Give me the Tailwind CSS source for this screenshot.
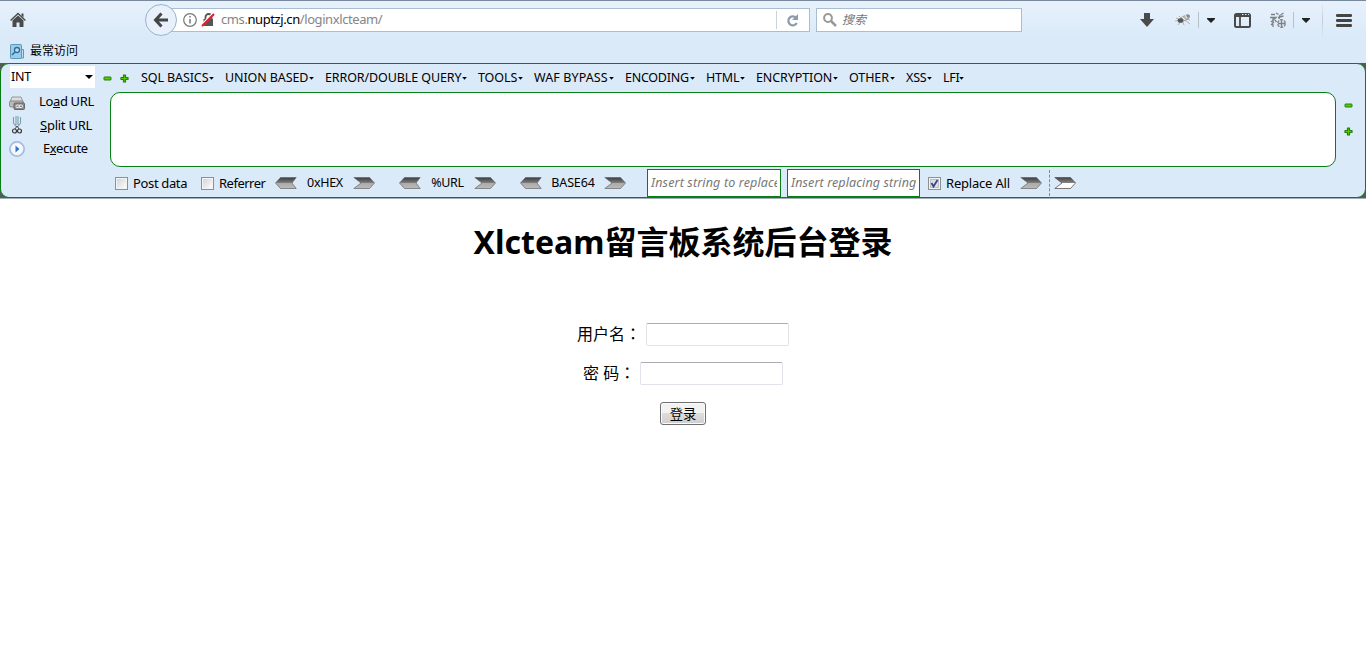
<!DOCTYPE html>
<html lang="zh">
<head>
<meta charset="utf-8">
<title>Xlcteam留言板系统后台登录</title>
<script src="https://cdn.jsdelivr.net/npm/@tailwindcss/browser@4"></script>
</head>
<body class="h-[648px] w-[1366px] overflow-hidden bg-white font-['Noto_Sans','Noto_Sans_CJK_SC',sans-serif] text-[13px] text-black">
<svg width="0" height="0" class="absolute">
  <defs>
    <linearGradient id="metal" x1="0" y1="0" x2="0" y2="1"><stop offset="0" stop-color="#3d3d3d"/><stop offset=".45" stop-color="#777"/><stop offset=".5" stop-color="#aaa"/><stop offset="1" stop-color="#bbb"/></linearGradient>
    <linearGradient id="half" x1="0" y1="0" x2="0" y2="1"><stop offset="0" stop-color="#444"/><stop offset=".5" stop-color="#888"/><stop offset=".52" stop-color="#fff"/><stop offset="1" stop-color="#fff"/></linearGradient>
    <symbol id="right" viewBox="0 0 22 12"><path d="M.8.5h15.700l5 5.500-5 5.500H.8L8 6z" fill="url(#metal)" stroke="#666" stroke-width=".7"/></symbol>
    <symbol id="left" viewBox="0 0 22 12"><path d="M21.200.5H5.500L.5 6l5 5.500h15.700L17 6z" fill="url(#metal)" stroke="#666" stroke-width=".7"/></symbol>
    <symbol id="minus" viewBox="0 0 9 9"><rect x="1" y="3" width="7" height="3" rx=".5" fill="#4fd000" stroke="#2b7d0c"/></symbol>
    <symbol id="plus" viewBox="0 0 9 9"><path d="M3.500 1h2v2.500H8v2H5.500V8h-2V5.500H1v-2h2.500z" fill="#4fd000" stroke="#2b7d0c" stroke-width="1.200" stroke-linejoin="round"/></symbol>
    <symbol id="caret" viewBox="0 0 5 3"><path d="M.2 0h4.600L2.500 2.700z"/></symbol>
    <symbol id="drop" viewBox="0 0 8 5"><path d="M0 0h8v1L4 5 0 1z" fill="#222"/></symbol>
  </defs>
</svg>

<header class="flex h-[63px] flex-col border-t border-[#78889d] bg-linear-to-b from-[#e7f1fc] to-[#daeaf9] to-60%">
  <div class="flex h-[38px] items-center">
    <svg class="ml-[10px] w-4" height="16" viewBox="0 0 16 16" fill="#4a4a4a"><path d="M8 3.500l5.500 5V15H9.500v-4.500h-3V15h-4V8.500z"/><path d="M.6 8.600L8 1.500l7.400 7.100" fill="none" stroke="#4a4a4a" stroke-width="1.400"/><path d="M11.500 1.500h2v4l-2-2z"/></svg>
    <div class="z-10 ml-[119px] flex size-8 items-center justify-center rounded-full border border-[#9db2c8] bg-[#e8f1fb]">
      <svg width="16" height="16" viewBox="0 0 16 16" fill="none" stroke="#454545" stroke-width="3"><path d="M8.500 1.500L2.500 8l6 6.500M3 8h12"/></svg>
    </div>
    <div class="-ml-[6px] flex h-6 w-[639px] items-center border border-[#a9bdd3] bg-white pl-[11px]">
      <svg width="14" height="14" viewBox="0 0 14 14" fill="none" stroke="#777"><circle cx="7" cy="7" r="6.300" stroke-width="1.200"/><path d="M7 6v4.500M7 3v1.600" stroke-width="1.500"/></svg>
      <svg class="ml-1" width="14" height="14" viewBox="0 0 14 14"><path d="M2.500 6h9.500v7H2.500z" fill="#555"/><path d="M4.500 6V4a3 3 0 016 0v2" fill="none" stroke="#555" stroke-width="1.800"/><path d="M1 12L12 1" stroke="#fff" stroke-width="2.600"/><path d="M1 13L13 1" stroke="#d8202a" stroke-width="1.900"/></svg>
      <span class="ml-[6px] w-[555px] whitespace-nowrap text-[13px] tracking-[-0.41px] text-[#858585]">cms.<span class="text-black">nuptzj.cn</span>/loginxlcteam/</span>
      <span class="h-[18px] w-px bg-[#c9d3de]"></span>
      <svg class="ml-[9px]" width="13" height="13" viewBox="0 0 13 13"><path d="M10 3.600A4.500 4.500 0 1010.800 9" fill="none" stroke="#8c9baa" stroke-width="2.200"/><path d="M12 0v6H6z" fill="#8c9baa"/></svg>
    </div>
    <div class="ml-[6px] flex h-6 w-[206px] items-center border border-[#a9bdd3] bg-white pl-[6px]">
      <svg width="14" height="14" viewBox="0 0 14 14" fill="none" stroke="#999"><circle cx="5" cy="5" r="3.900" stroke-width="2"/><path d="M8 8l5 5" stroke-width="2.500"/></svg>
      <span class="ml-[5px] text-[12px] italic text-[#777]">搜索</span>
    </div>
    <svg class="ml-[118px]" width="14" height="14" viewBox="0 0 14 14" fill="#4a4a4a"><path d="M4 0h6v6h4l-7 8-7-8h4z"/></svg>
    <svg class="ml-[21px]" width="16" height="14" viewBox="0 0 16 14"><g stroke="#999" stroke-width=".7"><path d="M1 5l5 2M0 8l6-1M3 12l3-4M9 12L7 7M10 7l5 4M11 6l4 1M6 5L4 3"/></g><ellipse cx="10" cy="5" rx="5" ry="2.300" transform="rotate(-25 10 5)" fill="#bbb" stroke="#888" stroke-width=".6"/><ellipse cx="5.500" cy="7.500" rx="2.800" ry="2.300" fill="#555"/><circle cx="13" cy="3" r="1.600" fill="#888"/><path d="M7 4l3 3M10 2l2 3" stroke="#eee"/></svg>
    <span class="ml-[7px] h-4 w-px bg-[#b5c0cb]"></span>
    <svg class="ml-[8px]" width="8" height="5"><use href="#drop"/></svg>
    <svg class="ml-[19px]" width="17" height="15" viewBox="0 0 17 15" fill="none" stroke="#4a4a4a" stroke-width="2"><rect x="1" y="1" width="15" height="13" rx="1.500"/><path d="M1 3h15M6 4v10" stroke-width="1.800"/><path d="M8 1.500h1.500M11 1.500h1.500M14 1.500h1" stroke="#dce7f2" stroke-width="1"/></svg>
    <svg class="ml-[19px]" width="16" height="16" viewBox="0 0 16 16" fill="none" stroke="#808080" stroke-width="1.300"><path d="M1 2.500h4M0 5.500h6L1 10M3 5v10M5 8l1.500 2M6 1l2.500 1.500M13.500 1l-3 2M8 5.500l5.500-1.500M10 3l-1 4M1 13l3-3"/><circle cx="11.500" cy="11.500" r="3.800" stroke-dasharray="3 1"/><path d="M11.500 8v7M8 11.500h7"/></svg>
    <span class="ml-[7px] h-4 w-px bg-[#b5c0cb]"></span>
    <svg class="ml-[8px]" width="8" height="5"><use href="#drop"/></svg>
    <span class="ml-[12px] h-[37px] w-px bg-linear-to-b from-transparent via-[#c3ccd7] to-transparent"></span>
    <svg class="ml-[13px]" width="16" height="13" viewBox="0 0 16 13" fill="#444"><rect width="16" height="3" rx="1.200"/><rect y="5" width="16" height="3" rx="1.200"/><rect y="10" width="16" height="3" rx="1.200"/></svg>
  </div>
  <div class="flex h-[24px] items-center pl-[10px]">
    <svg width="14" height="15" viewBox="0 0 14 15"><path d="M10.500 5.500h3v8.500h-3" fill="#bde0f3" stroke="#5b98bb"/><rect x=".5" y=".5" width="11" height="14" rx=".8" fill="#9bcbe6" stroke="#5b98bb"/><circle cx="7" cy="6" r="2.500" fill="#b8e1f5" stroke="#336d94" stroke-width="1.300"/><path d="M5 8l-3 3" stroke="#336d94" stroke-width="1.600"/></svg>
    <span class="ml-[6px] text-[12px]">最常访问</span>
  </div>
</header>

<section class="h-[135px] bg-[#585858]">
  <div class="flex h-[135px] rounded-[9px] border border-[#087f15] bg-[#daeaf9]">
    <aside class="flex w-[109px] shrink-0 flex-col pl-[8px] pt-[2px]">
      <div class="ml-px flex h-[22px] w-[85px] items-center bg-white pl-px text-[12.500px]">
        <span class="w-[74px] pt-px tracking-[-0.3px]">INT</span><svg width="8" height="4" viewBox="0 0 8 4"><path d="M0 0h8L4 4z"/></svg>
      </div>
      <div class="flex h-[25px] items-center pt-[3px]">
        <svg class="mt-px" width="16" height="14" viewBox="0 0 16 14"><path d="M3 1h9l2 5H1z" fill="#ddd" stroke="#999"/><rect x=".5" y="5" width="14" height="6" rx="1.500" fill="#bbb" stroke="#888"/><rect x="5" y="7" width="10.500" height="6.500" rx="1" fill="#888" stroke="#666"/><rect x="7" y="9" width="3.500" height="2.500" rx="1" fill="none" stroke="#eee"/><rect x="10" y="9" width="3.500" height="2.500" rx="1" fill="none" stroke="#eee"/></svg>
        <span class="ml-[14px] whitespace-nowrap tracking-[-0.35px]">Lo<u>a</u>d URL</span>
      </div>
      <div class="flex h-[24px] items-center pl-[3px]">
        <svg width="10" height="18" viewBox="0 0 10 18" fill="none"><path d="M1.500 1v6l3 4M8.500 1v6l-3 4M4 0v9M6 0v9" stroke="#7ba0ac" stroke-width="1.100"/><circle cx="2.500" cy="15" r="2" stroke="#3a3a3a" stroke-width="1.200"/><circle cx="7.500" cy="15" r="2" stroke="#3a3a3a" stroke-width="1.200"/><path d="M3 13l2-3 2 3" stroke="#444"/></svg>
        <span class="ml-[18px] whitespace-nowrap pt-px tracking-[-0.25px]"><u>S</u>plit URL</span>
      </div>
      <div class="flex h-[23px] items-center">
        <svg width="16" height="16" viewBox="0 0 16 16"><circle cx="8" cy="8" r="7.200" fill="#e5eefa" stroke="#9db9df" stroke-width="1.500"/><circle cx="8" cy="8" r="5.500" fill="#f6faff"/><path d="M6.500 4.500l4 3.500-4 3.500z" fill="#3473c6"/></svg>
        <span class="ml-[17px] whitespace-nowrap pl-px tracking-[-0.4px]">E<u>x</u>ecute</span>
      </div>
    </aside>

    <div class="flex w-[1226px] shrink-0 flex-col">
      <nav class="-ml-[7px] flex h-[28px] items-center whitespace-nowrap text-[12.500px] tracking-[-0.1px]">
        <svg class="mr-[8px]" width="9" height="9"><use href="#minus"/></svg>
        <svg class="mr-[12px]" width="9" height="9"><use href="#plus"/></svg>
        <div class="flex w-[84px] items-center"><span class="w-[68px]">SQL BASICS</span><svg width="5" height="3"><use href="#caret"/></svg></div>
        <div class="flex w-[100px] items-center"><span class="w-[84px]">UNION BASED</span><svg width="5" height="3"><use href="#caret"/></svg></div>
        <div class="flex w-[153px] items-center"><span class="w-[137px]">ERROR/DOUBLE QUERY</span><svg width="5" height="3"><use href="#caret"/></svg></div>
        <div class="flex w-[56px] items-center"><span class="w-[40px]">TOOLS</span><svg width="5" height="3"><use href="#caret"/></svg></div>
        <div class="flex w-[91px] items-center"><span class="w-[75px] tracking-[0.1px]">WAF BYPASS</span><svg width="5" height="3"><use href="#caret"/></svg></div>
        <div class="flex w-[81px] items-center"><span class="w-[65px] tracking-[-0.25px]">ENCODING</span><svg width="5" height="3"><use href="#caret"/></svg></div>
        <div class="flex w-[50px] items-center"><span class="w-[34px] tracking-[-0.2px]">HTML</span><svg width="5" height="3"><use href="#caret"/></svg></div>
        <div class="flex w-[93px] items-center"><span class="w-[77px]">ENCRYPTION</span><svg width="5" height="3"><use href="#caret"/></svg></div>
        <div class="flex w-[57px] items-center"><span class="w-[41px]">OTHER</span><svg width="5" height="3"><use href="#caret"/></svg></div>
        <div class="flex w-[37px] items-center"><span class="w-[21px] tracking-[-0.2px]">XSS</span><svg width="5" height="3"><use href="#caret"/></svg></div>
        <div class="flex items-center"><span class="w-[16px] tracking-[-0.3px]">LFI</span><svg width="5" height="3"><use href="#caret"/></svg></div>
      </nav>
      <div class="h-[75px] rounded-[10px] border border-[#087f15] bg-white"></div>
      <div class="flex h-[30px] items-center whitespace-nowrap pl-[5px] pt-[2px]">
        <span class="size-[13px] border border-[#8e8f8f] bg-linear-to-br from-[#cfd3d8] to-white outline-1 -outline-offset-2 outline-[#f4f4f4]"></span>
        <span class="ml-[5px] w-[68px] pt-px tracking-[-0.35px]">Post data</span>
        <span class="size-[13px] border border-[#8e8f8f] bg-linear-to-br from-[#cfd3d8] to-white outline-1 -outline-offset-2 outline-[#f4f4f4]"></span>
        <span class="ml-[5px] w-[56px] pt-px tracking-[-0.5px]">Referrer</span>
        <svg width="22" height="12"><use href="#left"/></svg>
        <span class="w-[56px] text-center text-[12.500px] tracking-[-0.3px]">0xHEX</span>
        <svg width="22" height="12"><use href="#right"/></svg>
        <svg class="ml-[24px]" width="22" height="12"><use href="#left"/></svg>
        <span class="w-[53px] text-center text-[12.500px] tracking-[-0.3px]">%URL</span>
        <svg width="22" height="12"><use href="#right"/></svg>
        <svg class="ml-[24px]" width="22" height="12"><use href="#left"/></svg>
        <span class="w-[62px] text-center text-[12.500px] tracking-[-0.15px]">BASE64</span>
        <svg width="22" height="12"><use href="#right"/></svg>
        <div class="ml-[21px] flex h-[28px] w-[134px] items-center border border-[#087f15] bg-white px-[3px]"><span class="w-full overflow-hidden pt-px text-[12.500px] italic tracking-[0.15px] text-[#777]">Insert string to replace</span></div>
        <div class="ml-[6px] flex h-[28px] w-[133px] items-center border border-[#087f15] bg-white px-[3px]"><span class="w-full overflow-hidden pt-px text-[12.500px] italic tracking-[0.12px] text-[#777]">Insert replacing string</span></div>
        <svg class="ml-[8px]" width="13" height="13" viewBox="0 0 13 13"><rect x=".5" y=".5" width="12" height="12" fill="#f4f4f4" stroke="#8e8f8f"/><rect x="2.500" y="2.500" width="8" height="8" fill="#dce0e7" stroke="#b8bdc6"/><path d="M3.500 6l2 3.500L9.500 3" fill="none" stroke="#34468e" stroke-width="1.800"/></svg>
        <span class="ml-[5px] w-[74px] pt-px tracking-[-0.2px]">Replace All</span>
        <svg width="22" height="12"><use href="#right"/></svg>
        <span class="ml-[7px] h-[26px] border-l border-dashed border-[#888]"></span>
        <svg class="ml-[4px]" width="22" height="12" viewBox="0 0 22 12"><path d="M.8.5h15.700l5 5.500-5 5.500H.8L8 6z" fill="url(#half)" stroke="#555" stroke-width=".8"/></svg>
      </div>
    </div>
    <div class="ml-[8px] flex flex-col gap-[17px] pt-[37px]">
      <svg width="9" height="9"><use href="#minus"/></svg>
      <svg width="9" height="9"><use href="#plus"/></svg>
    </div>
  </div>
</section>

<main class="flex flex-col items-center border-t border-[#a3adb9] text-[16px]">
  <h1 class="mt-[19px] h-[48px] whitespace-nowrap text-[32px] font-bold leading-[48px]">Xlcteam留言板系统后台登录</h1>
  <form class="flex flex-col items-center">
    <label class="mt-[57px] flex h-[23px] items-center gap-[5px]"><span class="w-[64px] whitespace-nowrap pb-[2px]">用户名<span lang="zh-TW" class="font-['Noto_Sans_CJK_TC',sans-serif]">：</span></span><span class="h-[23px] w-[143px] rounded-[2px] border border-[#e2e3ea] border-t-[#abadb3] bg-white"></span></label>
    <label class="mt-[16px] flex h-[23px] items-center gap-[5px]"><span class="w-[52px] whitespace-nowrap pb-[2px]">密 码<span lang="zh-TW" class="font-['Noto_Sans_CJK_TC',sans-serif]">：</span></span><span class="h-[23px] w-[143px] rounded-[2px] border border-[#e2e3ea] border-t-[#abadb3] bg-white"></span></label>
    <button type="button" class="mt-[17px] h-[23px] w-[46px] rounded-[3px] border border-[#707070] bg-linear-to-b from-[#f2f2f2] from-50% via-[#dddddd] via-50% to-[#cfcfcf] text-[13.300px] leading-[20px] shadow-[inset_0_0_0_1px_#fafafa]">登录</button>
  </form>
</main>
</body>
</html>
